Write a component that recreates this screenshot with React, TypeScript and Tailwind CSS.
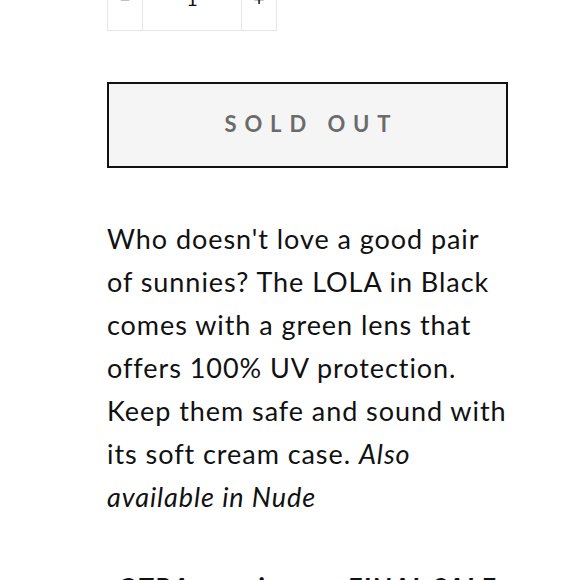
import React, { useState } from 'react';

const font = { fontFamily: 'Lato, "Open Sans", sans-serif' };

const App: React.FC = () => {
  const [qty, setQty] = useState(1);

  return (
    <div className="min-h-screen bg-white overflow-hidden" style={font}>
      <div className="w-[401px] ml-[107px] -mt-[36px]">
        {/* quantity */}
        <div className="flex h-[67px] w-[170px] border border-[#e6e6e6] text-[#111] text-[20px]">
          <button
            onClick={() => setQty(Math.max(1, qty - 1))}
            className="w-[34px] flex items-center justify-center"
          >
            −
          </button>
          <div className="flex-1 flex items-center justify-center border-x border-[#e6e6e6]">{qty}</div>
          <button onClick={() => setQty(qty + 1)} className="w-[34px] flex items-center justify-center">
            +
          </button>
        </div>

        <button
          disabled
          className="mt-[51px] w-full h-[86px] border-2 border-[#111] bg-[#f5f5f5] text-[#6b6b6b] font-bold text-[22px] tracking-[0.36em] pl-[0.36em] pb-[3px] flex items-center justify-center"
        >
          SOLD OUT
        </button>

        <p className="mt-[49px] text-[27px] leading-[43px] tracking-[0.035em] text-[#111] whitespace-nowrap">
          Who doesn't love a good pair
          <br />
          of sunnies? The LOLA in Black
          <br />
          comes with a green lens that
          <br />
          offers 100% UV protection.
          <br />
          Keep them safe and sound with
          <br />
          its soft cream case. <em>Also</em>
          <br />
          <em>available in Nude</em>
        </p>

        <p className="mt-[47px] pl-[10px] text-[27px] leading-[43px] tracking-[0.05em] text-[#111] font-bold italic whitespace-nowrap">
          OTRA sunnies are FINAL SALE
        </p>
      </div>
    </div>
  );
};

export default App;
